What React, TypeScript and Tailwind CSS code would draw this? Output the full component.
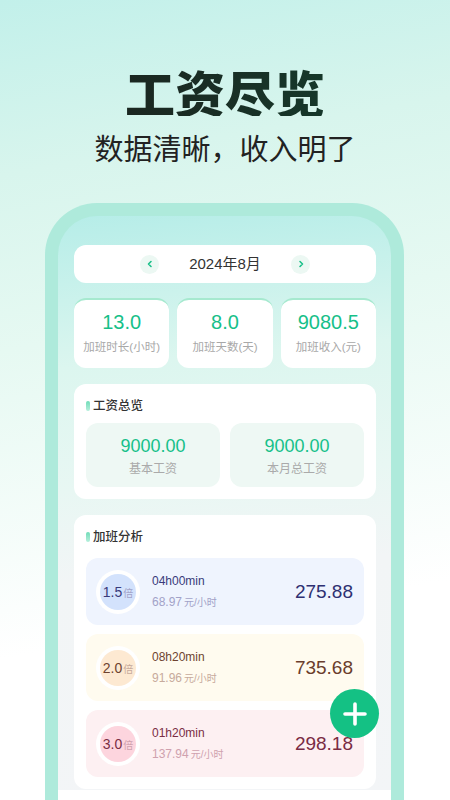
import React from "react";

const stats = [
  { value: "13.0", label: "加班时长(小时)" },
  { value: "8.0", label: "加班天数(天)" },
  { value: "9080.5", label: "加班收入(元)" },
];

const rows = [
  {
    rate: "1.5",
    time: "04h00min",
    hourly: "68.97",
    amount: "275.88",
    bg: "bg-[#eff4fe]",
    circle: "bg-[#d3e2fc]",
    main: "text-[#393a7a]",
    sub: "text-[#a2a2c8]",
    amt: "text-[#2e3072]",
  },
  {
    rate: "2.0",
    time: "08h20min",
    hourly: "91.96",
    amount: "735.68",
    bg: "bg-[#fffbef]",
    circle: "bg-[#fde9d2]",
    main: "text-[#6e4330]",
    sub: "text-[#c7aa9c]",
    amt: "text-[#6a3d2c]",
  },
  {
    rate: "3.0",
    time: "01h20min",
    hourly: "137.94",
    amount: "298.18",
    bg: "bg-[#fdf0f2]",
    circle: "bg-[#fdd5de]",
    main: "text-[#7a2d44]",
    sub: "text-[#cfa1ae]",
    amt: "text-[#7a2b44]",
  },
];

const SectionTitle = ({ text }: { text: string }) => (
  <div className="flex items-center gap-[3px] h-[16px]">
    <span className="w-[4px] h-[10px] rounded-full bg-gradient-to-b from-[#6fdcb8] to-[#b5efdc]" />
    <span className="text-[12.5px] font-medium text-[#333] leading-none">{text}</span>
  </div>
);

export default function App() {
  return (
    <div
      className="relative w-[450px] h-[800px] overflow-hidden flex flex-col bg-[linear-gradient(170deg,#c2f0ea_0%,#d8f5ed_20%,#e6f9f2_40%,#ffffff_75%)]"
      style={{ fontFamily: '"Liberation Sans", "Noto Sans CJK SC", sans-serif' }}
    >
      <div className="pt-[66px] text-center">
        <div
          className="text-[50px] leading-none font-black bg-gradient-to-r from-[#1b1c1b] to-[#0c4230] bg-clip-text text-transparent"
          style={{ fontFamily: '"Noto Sans CJK SC", sans-serif' }}
        >
          工资尽览
        </div>
        <div
          className="mt-[17px] text-[29px] leading-none font-normal text-[#222]"
          style={{ fontFamily: '"Noto Sans CJK SC", sans-serif' }}
        >
          数据清晰，收入明了
        </div>
      </div>

      <div className="mt-[41px] ml-[45px] w-[359px] flex-1 flex flex-col border-[13px] border-b-0 border-[#aeeadb] rounded-t-[52px] overflow-hidden bg-[linear-gradient(175deg,#b6ede8_0%,#dcf6ef_25%,#e8f7f3_45%,#f2f5f6_60%,#f3f5f7_100%)]">
        <div className="pt-[29px] pl-[16px] pr-[15px] flex flex-col">
          {/* month switcher */}
          <div className="h-[38px] rounded-[12px] bg-white flex items-center justify-center gap-[30px]">
            <div className="w-[19px] h-[19px] rounded-full bg-[#ecf8f3] flex items-center justify-center">
              <svg width="8" height="8" viewBox="0 0 8 8">
                <path d="M5 1.5 L2.5 4 L5 6.5" fill="none" stroke="#1cc08a" strokeWidth="1.6" strokeLinecap="round" strokeLinejoin="round" />
              </svg>
            </div>
            <span className="text-[15px] text-[#333] w-[72px] text-center">2024年8月</span>
            <div className="w-[19px] h-[19px] rounded-full bg-[#ecf8f3] flex items-center justify-center">
              <svg width="8" height="8" viewBox="0 0 8 8">
                <path d="M3 1.5 L5.5 4 L3 6.5" fill="none" stroke="#1cc08a" strokeWidth="1.6" strokeLinecap="round" strokeLinejoin="round" />
              </svg>
            </div>
          </div>

          {/* stats */}
          <div className="mt-[15px] grid grid-cols-3 gap-[8px]">
            {stats.map((s) => (
              <div
                key={s.label}
                className="h-[70px] rounded-[12px] bg-white border-t-[2px] border-t-[#a6e9cf] flex flex-col items-center pt-[12px]"
              >
                <span className="text-[20px] leading-[20px] text-[#16c089]">{s.value}</span>
                <span className="mt-[10px] text-[11.5px] leading-none text-[#a8a8a8]">{s.label}</span>
              </div>
            ))}
          </div>

          {/* salary overview */}
          <div className="mt-[16px] rounded-[12px] bg-white px-[12px] pt-[14px] pb-[12px]">
            <SectionTitle text="工资总览" />
            <div className="mt-[9px] grid grid-cols-2 gap-[10px]">
              {[
                { v: "9000.00", l: "基本工资" },
                { v: "9000.00", l: "本月总工资" },
              ].map((b) => (
                <div key={b.l} className="h-[64px] rounded-[12px] bg-[#eef8f4] flex flex-col items-center pt-[14px]">
                  <span className="text-[18px] leading-[18px] text-[#16c089]">{b.v}</span>
                  <span className="mt-[8px] text-[12px] leading-none text-[#aaa]">{b.l}</span>
                </div>
              ))}
            </div>
          </div>

          {/* overtime analysis */}
          <div className="mt-[16px] rounded-[12px] bg-white px-[12px] pt-[14px] pb-[12px] flex flex-col">
            <SectionTitle text="加班分析" />
            <div className="mt-[13px] flex flex-col gap-[9px]">
              {rows.map((r) => (
                <div key={r.rate} className={`h-[67px] rounded-[12px] ${r.bg} flex items-center pl-[10px] pr-[11px]`}>
                  <div className="w-[44px] h-[44px] rounded-full bg-white flex items-center justify-center">
                    <div className={`w-[36px] h-[36px] rounded-full ${r.circle} flex items-baseline justify-center`}>
                      <span className={`text-[14px] leading-[36px] ${r.main}`}>{r.rate}</span>
                      <span className={`text-[10px] ml-px ${r.sub}`}>倍</span>
                    </div>
                  </div>
                  <div className="ml-[12px] flex flex-col flex-1">
                    <span className={`text-[12px] leading-none font-medium ${r.main}`}>{r.time}</span>
                    <span className={`mt-[6px] leading-none ${r.sub}`}>
                      <span className="text-[12px]">{r.hourly}</span>
                      <span className="text-[10px] ml-[2px]">元/小时</span>
                    </span>
                  </div>
                  <span className={`text-[19px] leading-none ${r.amt}`}>{r.amount}</span>
                </div>
              ))}
            </div>
          </div>
        </div>
        <div className="mt-px flex-1 bg-white" />
      </div>

      {/* add button */}
      <div className="absolute left-[330px] top-[689px] w-[49px] h-[49px] rounded-full bg-[#14c184] flex items-center justify-center">
        <svg width="24" height="24" viewBox="0 0 24 24">
          <path d="M12 2 V22 M2 12 H22" stroke="#fff" strokeWidth="3.6" strokeLinecap="round" />
        </svg>
      </div>
    </div>
  );
}
